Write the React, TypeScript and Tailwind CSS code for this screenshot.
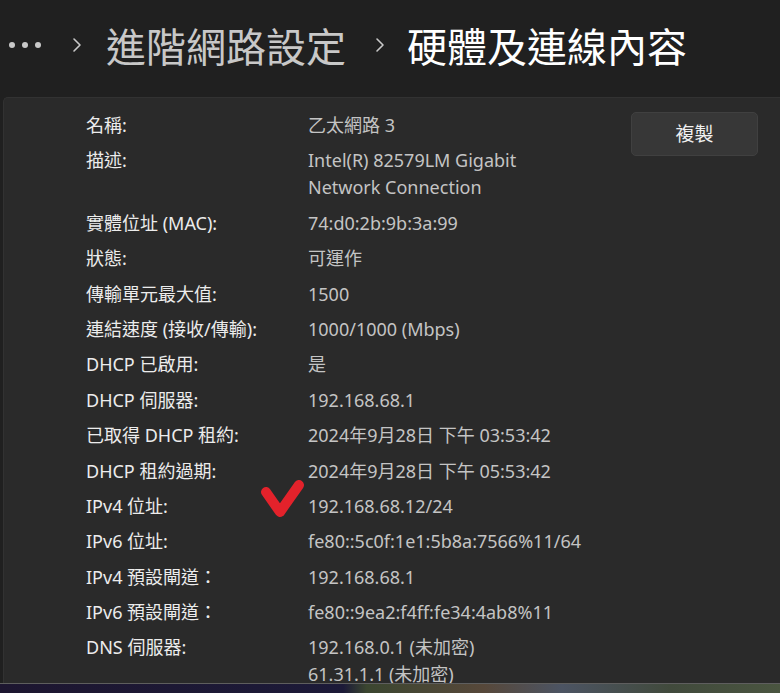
import React from 'react';

const rows: { label: string; value: string[] }[] = [
  { label: '名稱:', value: ['乙太網路 3'] },
  { label: '描述:', value: ['Intel(R) 82579LM Gigabit', 'Network Connection'] },
  { label: '實體位址 (MAC):', value: ['74:d0:2b:9b:3a:99'] },
  { label: '狀態:', value: ['可運作'] },
  { label: '傳輸單元最大值:', value: ['1500'] },
  { label: '連結速度 (接收/傳輸):', value: ['1000/1000 (Mbps)'] },
  { label: 'DHCP 已啟用:', value: ['是'] },
  { label: 'DHCP 伺服器:', value: ['192.168.68.1'] },
  { label: '已取得 DHCP 租約:', value: ['2024年9月28日 下午 03:53:42'] },
  { label: 'DHCP 租約過期:', value: ['2024年9月28日 下午 05:53:42'] },
  { label: 'IPv4 位址:', value: ['192.168.68.12/24'] },
  { label: 'IPv6 位址:', value: ['fe80::5c0f:1e1:5b8a:7566%11/64'] },
  { label: 'IPv4 預設閘道：', value: ['192.168.68.1'] },
  { label: 'IPv6 預設閘道：', value: ['fe80::9ea2:f4ff:fe34:4ab8%11'] },
  { label: 'DNS 伺服器:', value: ['192.168.0.1 (未加密)', '61.31.1.1 (未加密)'] },
];

const Chevron = () => (
  <svg width="10" height="16" viewBox="0 0 10 16" className="shrink-0">
    <path d="M2 2 L8 8 L2 14" fill="none" stroke="#c8c8c8" strokeWidth="1.6" strokeLinecap="round" strokeLinejoin="round" />
  </svg>
);

const App = () => {
  return (
    <div
      className="w-[780px] h-[693px] flex flex-col overflow-hidden bg-[#202020]"
      style={{ fontFamily: '"Noto Sans", "Noto Sans CJK TC", sans-serif' }}
    >
      {/* breadcrumb header */}
      <div className="h-[97px] shrink-0 flex items-center pl-[9px] pb-[8px]">
        <div className="flex items-center gap-[7px]">
          <span className="w-[6px] h-[6px] rounded-full bg-[#c8c8c8]"></span>
          <span className="w-[6px] h-[6px] rounded-full bg-[#c8c8c8]"></span>
          <span className="w-[6px] h-[6px] rounded-full bg-[#c8c8c8]"></span>
        </div>
        <div className="ml-[31px]">
          <Chevron />
        </div>
        <span
          className="ml-[24px] text-[40px] leading-[48px] text-[#c8c8c8]"
          style={{ fontFamily: '"Noto Sans CJK TC", sans-serif' }}
        >
          進階網路設定
        </span>
        <div className="ml-[29px]">
          <Chevron />
        </div>
        <span
          className="ml-[22px] text-[40px] leading-[48px] text-white"
          style={{ fontFamily: '"Noto Sans CJK TC", sans-serif' }}
        >
          硬體及連線內容
        </span>
      </div>

      {/* details panel */}
      <div className="relative flex-1 ml-[3px] bg-[#2a2a2a] border-l border-t border-[#323232] rounded-tl-[5px] overflow-hidden">
        <div className="flex pt-[14px] pl-[82px] pr-[22px]">
          <div className="flex-1 flex flex-col gap-[8.4px] text-[18px] leading-[27px]">
            {rows.map((r, i) => (
              <div key={i} className="flex">
                <div className="w-[222px] shrink-0 text-[#ececec]">{r.label}</div>
                <div className="text-[#c4c4c4]">
                  {r.value.map((v, j) => (
                    <div key={j}>{v}</div>
                  ))}
                </div>
              </div>
            ))}
          </div>
          <button className="w-[127px] h-[44px] shrink-0 rounded-[5px] bg-[#373737] border border-[#404040] text-[19px] text-[#f0f0f0]">
            複製
          </button>
        </div>

        {/* red check annotation */}
        <svg className="absolute left-[255px] top-[382px]" width="50" height="44" viewBox="0 0 50 44">
          <path
            d="M7 12 L21 32 L40 5"
            fill="none"
            stroke="#e3222b"
            strokeWidth="10"
            strokeLinecap="round"
            strokeLinejoin="round"
          />
        </svg>
      </div>

      {/* taskbar edge */}
      <div className="h-[10px] shrink-0 border-t border-[#5e5e5e] bg-[linear-gradient(90deg,#1d1630_0%,#1c1a38_44%,#3b4630_47%,#57483a_62%,#4c5463_72%,#414a3c_86%,#4a5540_100%)]"></div>
    </div>
  );
};

export default App;
